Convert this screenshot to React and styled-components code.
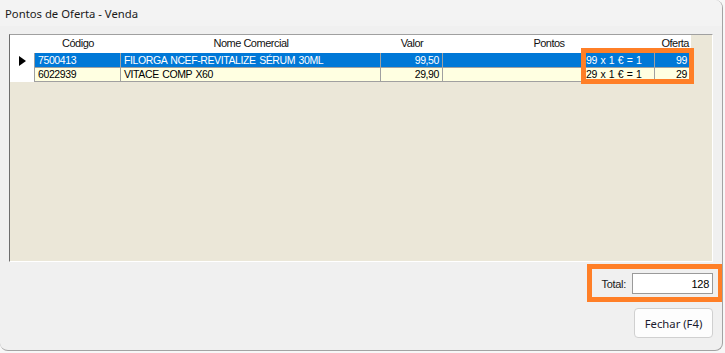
import React from "react";
import styled, { createGlobalStyle } from "styled-components";

const GlobalStyle = createGlobalStyle`
  html, body {
    margin: 0;
    padding: 0;
    background: #f7f7f7;
  }
  * {
    box-sizing: border-box;
  }
`;

const Window = styled.div`
  position: relative;
  width: 723px;
  height: 351px;
  background: #f0f0f0;
  border-right: 1px solid #a3a3a3;
  border-bottom: 1px solid #a3a3a3;
  border-radius: 0 8px 8px 8px;
  overflow: hidden;
  display: flex;
  flex-direction: column;
  font-family: "Liberation Sans", Arial, sans-serif;
`;

const TitleBar = styled.div`
  height: 26px;
  background: #f3f3f3;
  padding-left: 5px;
  display: flex;
  align-items: center;
  font-family: "Noto Sans", "Open Sans", sans-serif;
  font-size: 11.3px;
  color: #1a1a1a;
`;

const Body = styled.div`
  flex: 1;
  display: flex;
  flex-direction: column;
  padding: 8px 9px 0 9px;
`;

const Grid = styled.div`
  height: 228px;
  background: #ebe7d8;
  border-top: 1px solid #a0a0a0;
  border-left: 1px solid #6d6d6d;
  border-right: 1px solid #ffffff;
  border-bottom: 1px solid #ffffff;
  font-size: 10.5px;
  letter-spacing: -0.4px;
  word-spacing: 1px;
`;

const COLS = "25px 86px 260px 62px 140px 72px 36px";

const HeaderRow = styled.div`
  display: grid;
  grid-template-columns: ${COLS};
  width: 681px;
  height: 18px;
  background: #ffffff;
  color: #111;
  font-size: 11px;
  letter-spacing: -0.5px;
  word-spacing: 0;
`;

const HeadCell = styled.div`
  grid-column: ${(p) => (p.$span ? `span ${p.$span}` : "auto")};
  display: flex;
  align-items: flex-end;
  justify-content: ${(p) => (p.$align === "right" ? "flex-end" : "center")};
  padding: 0 2px 4px 2px;
  line-height: 12px;
  white-space: nowrap;
`;

const DataRow = styled.div`
  display: grid;
  grid-template-columns: ${COLS};
  width: 681px;
  height: ${(p) => p.$h}px;
`;

const RowHeader = styled.div`
  background: #ffffff;
  border-right: 1px solid #a0a0a0;
  display: flex;
  align-items: center;
  padding-left: 9px;
`;

const Pointer = styled.div`
  width: 0;
  height: 0;
  border-top: 5px solid transparent;
  border-bottom: 5px solid transparent;
  border-left: 7px solid #000;
`;

const Cell = styled.div`
  background: ${(p) => (p.$selected ? "#0078d7" : "#ffffe1")};
  color: ${(p) => (p.$selected ? "#ffffff" : "#000000")};
  border-right: 1px solid #a0a0a0;
  border-bottom: 1px solid #a0a0a0;
  display: flex;
  align-items: flex-start;
  justify-content: ${(p) => (p.$align === "right" ? "flex-end" : "flex-start")};
  padding: ${(p) => (p.$selected ? "1px" : "0")} 3px 0 3px;
  line-height: 12px;
  white-space: nowrap;
  overflow: hidden;
`;

const TotalRow = styled.div`
  display: flex;
  justify-content: flex-end;
  align-items: center;
  gap: 6px;
  margin-top: 11px;
  font-size: 11px;
  letter-spacing: -0.3px;
  color: #1a1a1a;
`;

const TotalInput = styled.div`
  width: 81px;
  height: 21px;
  background: #ffffff;
  border: 1px solid #9a9a9a;
  display: flex;
  align-items: center;
  justify-content: flex-end;
  padding-right: 3px;
  font-size: 11px;
  color: #000;
`;

const ButtonRow = styled.div`
  display: flex;
  justify-content: flex-end;
  margin-top: 14px;
`;

const Button = styled.button`
  width: 79px;
  height: 30px;
  background: #fdfdfd;
  border: 1px solid #d0d0d0;
  border-radius: 4px;
  font-family: "Noto Sans", "Open Sans", sans-serif;
  font-size: 11.3px;
  color: #1b1b2f;
  padding: 0;
`;

const Highlight = styled.div`
  position: absolute;
  left: ${(p) => p.$x}px;
  top: ${(p) => p.$y}px;
  width: ${(p) => p.$w}px;
  height: ${(p) => p.$h}px;
  border: 5px solid #ff7f27;
  pointer-events: none;
`;

const rows = [
  { code: "7500413", name: "FILORGA NCEF-REVITALIZE SÉRUM 30ML", valor: "99,50", pontos: "", regra: "99 x 1 € = 1", oferta: "99" },
  { code: "6022939", name: "VITACE COMP X60", valor: "29,90", pontos: "", regra: "29 x 1 € = 1", oferta: "29" },
];

export default function App() {
  return (
    <>
      <GlobalStyle />
      <Window>
        <TitleBar>Pontos de Oferta - Venda</TitleBar>
        <Body>
          <Grid>
            <HeaderRow>
              <HeadCell />
              <HeadCell>Código</HeadCell>
              <HeadCell>Nome Comercial</HeadCell>
              <HeadCell>Valor</HeadCell>
              <HeadCell $span={2}>Pontos</HeadCell>
              <HeadCell $align="right">Oferta</HeadCell>
            </HeaderRow>
            {rows.map((r, i) => {
              const sel = i === 0;
              return (
                <DataRow key={r.code} $h={sel ? 15 : 14}>
                  <RowHeader>{sel && <Pointer />}</RowHeader>
                  <Cell $selected={sel}>{r.code}</Cell>
                  <Cell $selected={sel}>{r.name}</Cell>
                  <Cell $selected={sel} $align="right">{r.valor}</Cell>
                  <Cell $selected={sel}>{r.pontos}</Cell>
                  <Cell $selected={sel}>{r.regra}</Cell>
                  <Cell $selected={sel} $align="right">{r.oferta}</Cell>
                </DataRow>
              );
            })}
          </Grid>
          <TotalRow>
            <span>Total:</span>
            <TotalInput>128</TotalInput>
          </TotalRow>
          <ButtonRow>
            <Button>Fechar (F4)</Button>
          </ButtonRow>
        </Body>
        <Highlight $x={581} $y={48} $w={113} $h={36} />
        <Highlight $x={587} $y={264} $w={136} $h={38} />
      </Window>
    </>
  );
}
